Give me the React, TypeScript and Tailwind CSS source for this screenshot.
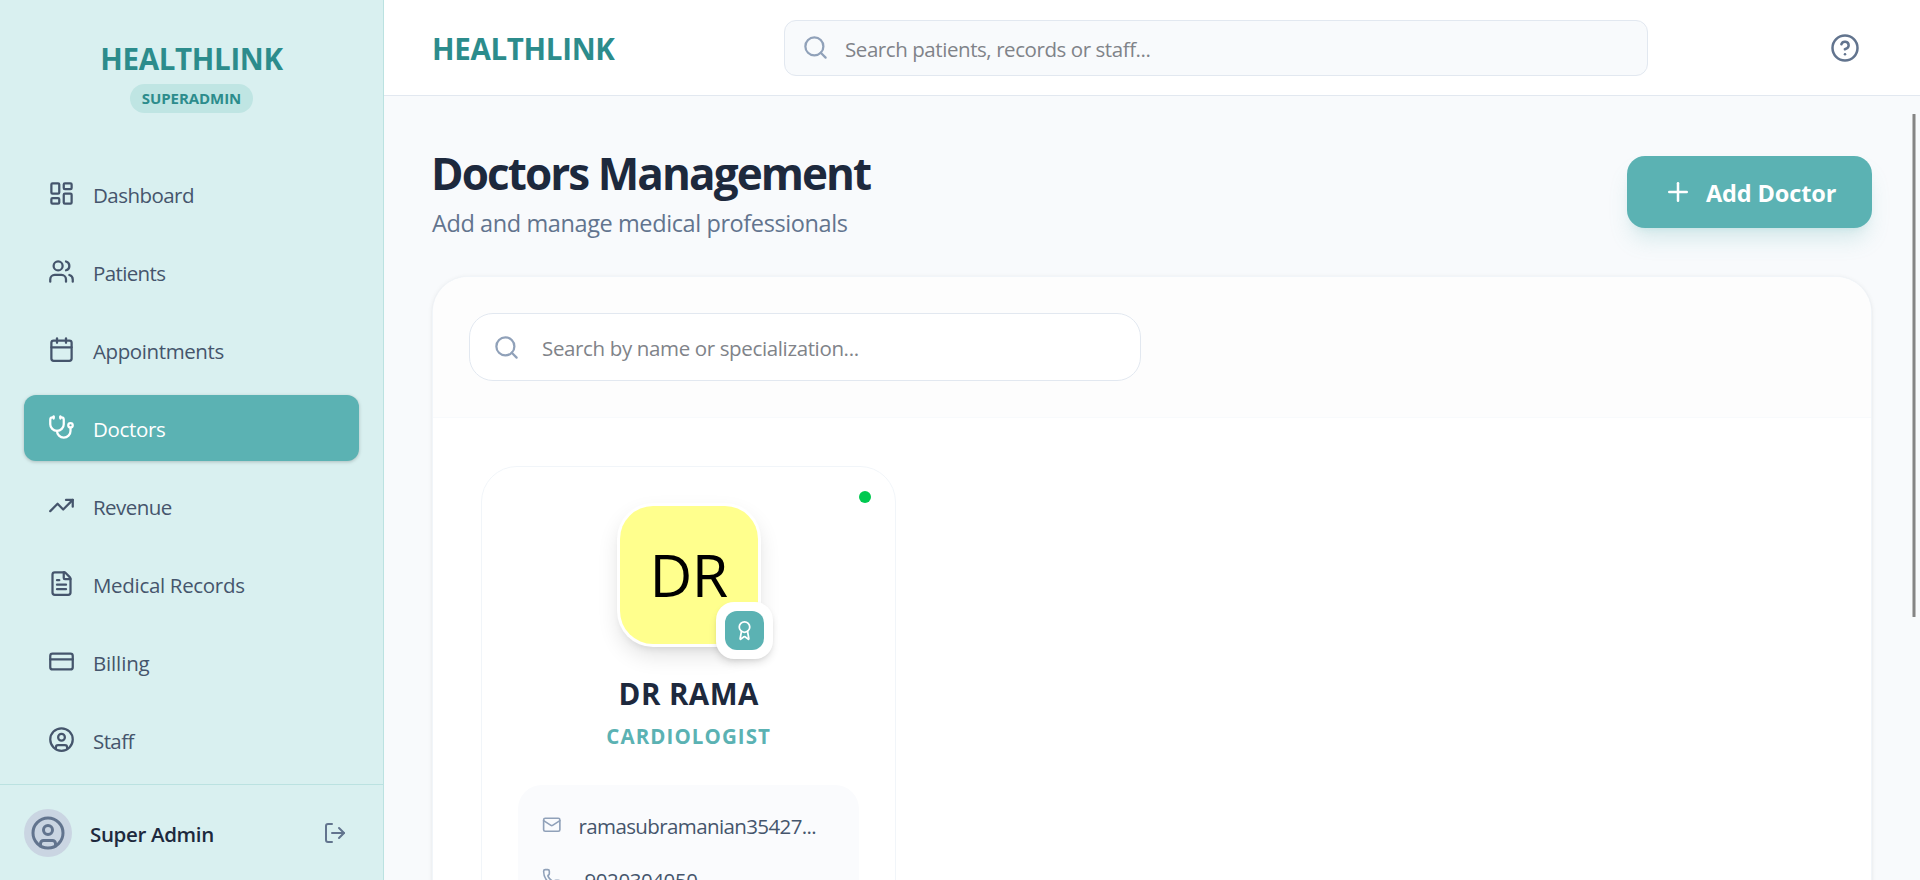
import React from "react";
import {
  LayoutDashboard,
  Users,
  Calendar,
  Stethoscope,
  TrendingUp,
  FileText,
  CreditCard,
  CircleUser,
  LogOut,
  Search,
  CircleHelp,
  Plus,
  Award,
  Mail,
  Phone,
  type LucideIcon,
} from "lucide-react";

type NavItem = { label: string; icon: LucideIcon; tracking: string; active?: boolean };

const NAV: NavItem[] = [
  { label: "Dashboard", icon: LayoutDashboard, tracking: "tracking-[-0.54px]" },
  { label: "Patients", icon: Users, tracking: "tracking-[-0.62px]" },
  { label: "Appointments", icon: Calendar, tracking: "tracking-[-0.4px]" },
  { label: "Doctors", icon: Stethoscope, tracking: "tracking-[-0.35px]", active: true },
  { label: "Revenue", icon: TrendingUp, tracking: "tracking-[-0.55px]" },
  { label: "Medical Records", icon: FileText, tracking: "tracking-[-0.32px]" },
  { label: "Billing", icon: CreditCard, tracking: "tracking-[-0.16px]" },
  { label: "Staff", icon: CircleUser, tracking: "tracking-[-0.6px]" },
];

function Sidebar() {
  return (
    <aside className="flex w-96 shrink-0 flex-col border-r border-[#bbe2e1] bg-[#d9f0f0]">
      <div className="flex h-[161px] shrink-0 flex-col items-center pt-9">
        <div className="text-[29.5px] leading-[45px] font-bold tracking-[-0.32px] text-[#2c8c8c]">HEALTHLINK</div>
        <div className="mt-[3px] flex h-[29px] w-[123px] items-center justify-center rounded-full bg-[#bfe5e3] pb-px text-[15px] font-bold tracking-[-0.065px] text-[#2c8c8c]">
          SUPERADMIN
        </div>
      </div>
      <nav className="flex min-h-0 flex-1 flex-col gap-3 overflow-hidden px-6">
        {NAV.map(({ label, icon: Icon, tracking, active }) => (
          <a
            key={label}
            className={
              active
                ? "flex h-[66px] shrink-0 items-center gap-[18px] rounded-xl bg-[#5bb2b3] px-6 text-white shadow-[0_1px_4px_rgba(0,0,0,0.12),0_1px_3px_rgba(0,0,0,0.1)]"
                : "flex h-[66px] shrink-0 items-center gap-[18px] px-6 text-[#45556c]"
            }
          >
            <Icon size={27} strokeWidth={2} className="-mt-px shrink-0" />
            <span className={`pt-0.5 text-[20.5px] leading-[30px] ${tracking}`}>{label}</span>
          </a>
        ))}
      </nav>
      <div className="flex h-24 shrink-0 items-center border-t border-[#bbe2e1] px-6 pt-px">
        <div className="flex size-12 items-center justify-center rounded-full bg-[#cad5e2] text-[#62748e]">
          <CircleUser size={36} />
        </div>
        <div className="ml-[18px] flex-1 pt-0.5 text-[20.5px] leading-[30px] font-semibold tracking-[-0.35px] text-[#1d293d]">
          Super Admin
        </div>
        <LogOut size={24} className="mr-3 text-[#62748e]" />
      </div>
    </aside>
  );
}

function TopBar() {
  return (
    <header className="flex h-24 shrink-0 items-center border-b border-[#e2e8f0] bg-white px-12">
      <div className="w-[352px] pt-0.5 text-[29.5px] leading-[45px] font-bold tracking-[-0.32px] text-[#2c8c8c]">
        HEALTHLINK
      </div>
      <div className="flex h-14 w-[864px] items-center rounded-xl border border-[#e2e8f0] bg-[#f8fafc] pl-[17px]">
        <Search size={27} className="text-[#90a1b9]" />
        <span className="ml-4 pt-[3px] text-[20.5px] tracking-[-0.43px] whitespace-nowrap text-[#808389]">
          Search patients, records or staff...
        </span>
      </div>
      <div className="flex flex-1 justify-end pr-3">
        <CircleHelp size={30} className="text-[#62748e]" />
      </div>
    </header>
  );
}

function DoctorCard() {
  return (
    <article className="relative flex h-[640px] flex-col items-center rounded-[36px] border border-[#f1f5f9] bg-white px-9 pt-9">
      <span className="absolute top-6 right-6 size-3 rounded-full bg-[#00c950]" />
      <div className="relative size-36 rounded-[36px] bg-white p-[3px] shadow-[0_10px_22px_-2px_rgba(0,0,0,0.12),0_5px_8px_-5px_rgba(0,0,0,0.12)]">
        <div className="flex h-full items-center justify-center rounded-[33px] bg-[#ffff8d] pb-0.5 text-[59px] leading-none tracking-[-0.5px] text-black">
          DR
        </div>
        <div className="absolute -right-3 -bottom-3 rounded-[18px] bg-white p-[9px] shadow-[0_5px_9px_-1px_rgba(0,0,0,0.12),0_2px_5px_-2px_rgba(0,0,0,0.1)]">
          <div className="flex size-[39px] items-center justify-center rounded-xl bg-[#5bb2b3] text-white">
            <Award size={21} />
          </div>
        </div>
      </div>
      <h3 className="mt-6 text-[29.5px] leading-[45px] font-bold tracking-[0.45px] text-[#1d293d]">DR RAMA</h3>
      <p className="mt-[5px] text-[20.5px] leading-[30px] font-bold tracking-[1.09px] text-[#5bb2b3]">CARDIOLOGIST</p>
      <div className="mt-[34px] flex w-full flex-1 flex-col gap-6 rounded-t-[24px] bg-[#fafbfd] px-6 pt-6 text-[20.5px] leading-[30px] text-[#45556c]">
        <div className="flex items-center gap-[17px]">
          <Mail size={19.5} className="text-[#90a1b9]" />
          <span className="pt-0.5 tracking-[-0.61px]">ramasubramanian35427...</span>
        </div>
        <div className="flex items-center gap-[23px]">
          <Phone size={19.5} className="-mt-[5px] text-[#90a1b9]" />
          <span className="tracking-[-0.42px]">9020304050</span>
        </div>
      </div>
    </article>
  );
}

export default function App() {
  return (
    <div className="relative flex h-[880px] w-[1920px] overflow-hidden bg-[#f8fafc] font-['Open_Sans','Noto_Sans',sans-serif]">
      <Sidebar />
      <div className="flex min-w-0 flex-1 flex-col">
        <TopBar />
        <main className="flex min-h-0 flex-1 flex-col overflow-hidden px-12">
          <div className="flex h-[180px] shrink-0 justify-between">
            <div className="pt-[50px]">
              <h1 className="-ml-px text-[44px] leading-[54px] font-bold tracking-[-1.91px] text-[#1d293d]">
                Doctors Management
              </h1>
              <p className="mt-[5px] text-[23.5px] leading-[36px] tracking-[-0.4px] text-[#62748e]">
                Add and manage medical professionals
              </p>
            </div>
            <button className="mt-[60px] flex h-[72px] w-[245px] items-center rounded-[18px] bg-[#5bb2b3] pl-9 text-white shadow-[0_15px_22.5px_-4.5px_rgba(91,178,179,0.22),0_6px_9px_-6px_rgba(91,178,179,0.22)]">
              <Plus size={30} />
              <span className="ml-[13px] pt-1 text-[23.5px] font-bold tracking-[-0.13px]">Add Doctor</span>
            </button>
          </div>
          <section className="h-[900px] shrink-0 overflow-hidden rounded-[36px] border border-[#f1f5f9] bg-white shadow-[0_1px_5px_rgba(0,0,0,0.07),0_1px_3px_-1px_rgba(0,0,0,0.07)]">
            <div className="border-b border-[#f8fafc] bg-[#fdfdfd] p-9">
              <div className="flex h-[68px] w-[672px] items-center rounded-[24px] border border-[#e2e8f0] bg-white pl-[23px]">
                <Search size={27} className="text-[#90a1b9]" />
                <span className="ml-[22px] pt-[3px] text-[20.5px] tracking-[-0.36px] whitespace-nowrap text-[#808389]">
                  Search by name or specialization...
                </span>
              </div>
            </div>
            <div className="grid grid-cols-3 gap-12 p-12">
              <DoctorCard />
            </div>
          </section>
        </main>
      </div>
      <div className="absolute top-[114px] left-[1912px] h-[503px] w-1 rounded-[1px] border-x border-[#bdbdbd] bg-[#858585]" />
    </div>
  );
}
